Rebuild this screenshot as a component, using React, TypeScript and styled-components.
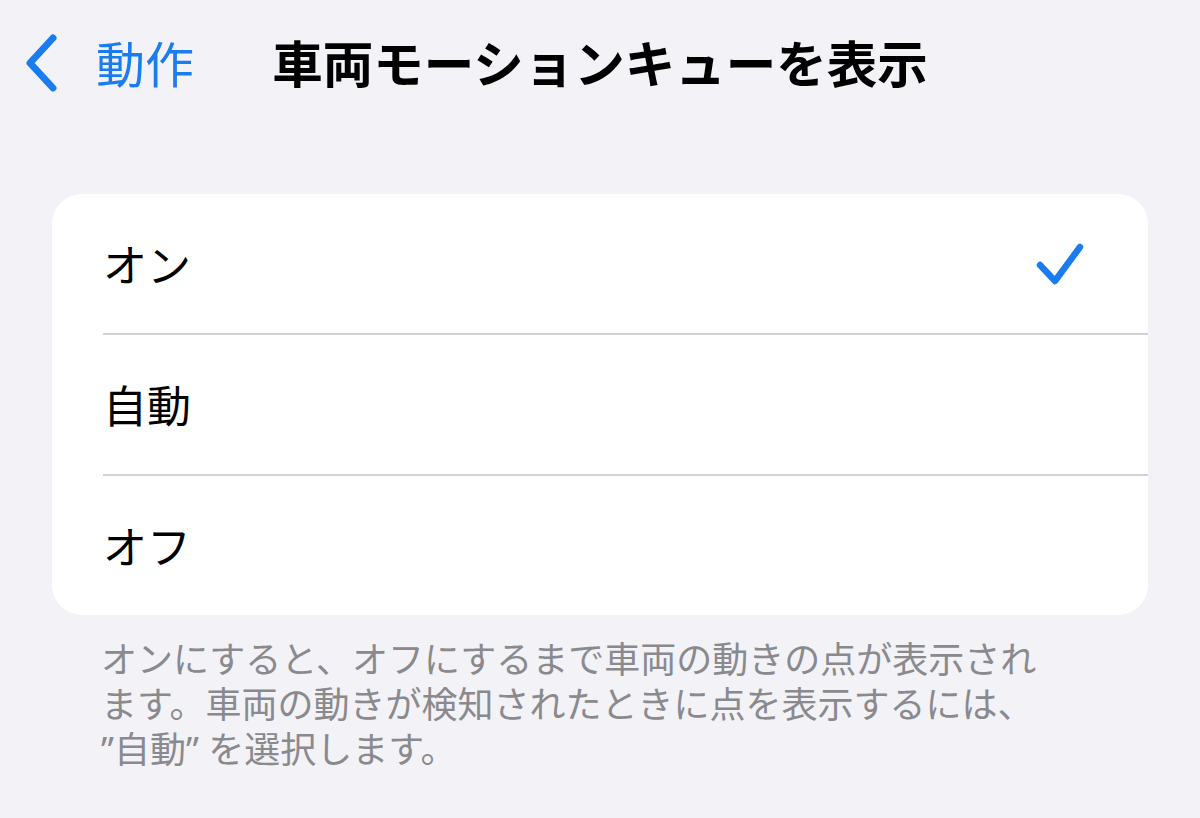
import React from "react";
import styled, { createGlobalStyle } from "styled-components";

const Global = createGlobalStyle`
  html, body {
    margin: 0;
    padding: 0;
    background: #f2f2f7;
  }
  body {
    font-family: "Noto Sans", "Noto Sans CJK JP", sans-serif;
    -webkit-font-smoothing: antialiased;
  }
`;

const Page = styled.div`
  width: 1200px;
  min-height: 818px;
  background: #f2f2f7;
  display: flex;
  flex-direction: column;
`;

const NavBar = styled.header`
  height: 128px;
  display: grid;
  grid-template-columns: 1fr auto 1fr;
  align-items: center;
`;

const BackButton = styled.div`
  display: flex;
  align-items: center;
  padding-left: 26px;
  gap: 36px;
`;

const BackLabel = styled.span`
  font-size: 49px;
  font-weight: 400;
  line-height: 1;
  color: #1a7cf0;
`;

const Title = styled.h1`
  margin: 0;
  font-size: 50.5px;
  font-weight: 700;
  color: #000;
  line-height: 1;
  white-space: nowrap;
`;

const Card = styled.section`
  margin: 66px 52px 0;
  background: #fff;
  border-radius: 30px;
  overflow: hidden;
  display: flex;
  flex-direction: column;
`;

const Row = styled.div<{ $last?: boolean }>`
  height: 139px;
  display: flex;
  align-items: center;
  justify-content: space-between;
  padding: 0 64px 0 51px;
  position: relative;
  font-size: 44px;
  color: #000;
  line-height: 1;
  &::after {
    content: "";
    display: ${(p) => (p.$last ? "none" : "block")};
    position: absolute;
    left: 51px;
    right: 0;
    bottom: -2px;
    height: 2px;
    background: #d2d2d6;
  }
  & + & {
    margin-top: 2px;
  }
`;

const RowLabel = styled.span`
  padding-top: 2px;
`;

const Footer = styled.p`
  margin: 22px 0 0 101px;
  width: 945px;
  font-size: 36px;
  line-height: 45px;
  color: #8a8a8e;
`;

const Chevron = () => (
  <svg width="34" height="60" viewBox="0 0 34 60" fill="none">
    <path
      d="M27 4 L4 29 L27 54"
      stroke="#1a7cf0"
      strokeWidth="7"
      strokeLinecap="round"
      strokeLinejoin="round"
    />
  </svg>
);

const Check = () => (
  <svg width="48" height="44" viewBox="0 0 48 44" fill="none">
    <path
      d="M4 23 L19 39 L44 5"
      stroke="#1a7cf0"
      strokeWidth="6.5"
      strokeLinecap="round"
      strokeLinejoin="round"
    />
  </svg>
);

const options = [
  { label: "オン", checked: true },
  { label: "自動", checked: false },
  { label: "オフ", checked: false },
];

export default function App() {
  return (
    <Page>
      <Global />
      <NavBar>
        <BackButton>
          <Chevron />
          <BackLabel>動作</BackLabel>
        </BackButton>
        <Title>車両モーションキューを表示</Title>
        <div />
      </NavBar>
      <Card>
        {options.map((o, i) => (
          <Row key={o.label} $last={i === options.length - 1}>
            <RowLabel>{o.label}</RowLabel>
            {o.checked && <Check />}
          </Row>
        ))}
      </Card>
      <Footer>
        オンにすると、オフにするまで車両の動きの点が表示されます。車両の動きが検知されたときに点を表示するには、
        <br />
        ”自動” を選択します。
      </Footer>
    </Page>
  );
}
